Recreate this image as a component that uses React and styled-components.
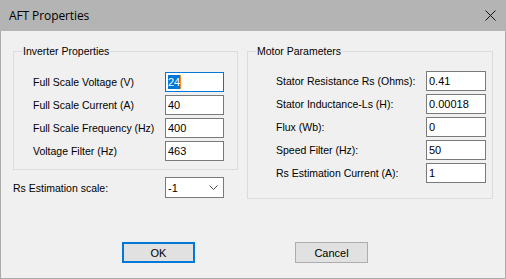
import React from "react";
import styled, { createGlobalStyle } from "styled-components";

const GlobalStyle = createGlobalStyle`
  html, body {
    margin: 0;
    padding: 0;
    background: #f0f0f0;
  }
  * {
    box-sizing: border-box;
  }
`;

const Window = styled.div`
  width: 506px;
  height: 279px;
  border: 1px solid #aaaaaa;
  border-top: none;
  background: #f0f0f0;
  font-family: "Liberation Sans", Arial, sans-serif;
  font-size: 10.5px;
  color: #000;
  display: flex;
  flex-direction: column;
`;

const TitleBar = styled.div`
  height: 31px;
  margin: 0 -1px;
  background: #b4b4b4;
  display: flex;
  align-items: center;
  justify-content: space-between;
  padding: 0 10px 0 9px;
  font-family: "Open Sans", "Noto Sans", sans-serif;
  font-size: 12px;
`;

const Title = styled.span`
  letter-spacing: -0.1px;
`;

const CloseIcon = () => (
  <svg width="11" height="11" viewBox="0 0 11 11">
    <path d="M0.5 0.5 L10.5 10.5 M10.5 0.5 L0.5 10.5" stroke="#111" strokeWidth="1" fill="none" />
  </svg>
);

const Body = styled.div`
  flex: 1;
  padding: 20px 12px 0 12px;
  display: flex;
  flex-direction: column;
`;

const TopRow = styled.div`
  display: flex;
  gap: 9px;
  align-items: flex-start;
`;

const Column = styled.div`
  width: 225px;
  display: flex;
  flex-direction: column;
`;

const GroupBox = styled.div`
  position: relative;
  width: ${(p) => p.$width}px;
  border: 1px solid #dcdcdc;
  padding: ${(p) => p.$pad};
`;

const Legend = styled.span`
  position: absolute;
  top: -8px;
  left: 8px;
  padding: 0 1px;
  background: #f0f0f0;
  line-height: 14px;
`;

const Rows = styled.div`
  display: flex;
  flex-direction: column;
  gap: 3px;
`;

const Row = styled.div`
  display: grid;
  grid-template-columns: 1fr ${(p) => p.$field}px;
  align-items: center;
  height: 20px;
`;

const Label = styled.span`
  white-space: nowrap;
`;

const TextBox = styled.div`
  height: 20px;
  border: 1px solid ${(p) => (p.$focused ? "#0078d7" : "#7a7a7a")};
  background: #fff;
  padding: 0 0 0 2px;
  display: flex;
  align-items: center;
  font-size: 11px;
`;

const Selected = styled.span`
  background: #0078d7;
  color: #fff;
  line-height: 14px;
  border-right: 1px solid #ff8c1a;
`;

const ScaleRow = styled.div`
  margin-top: 7px;
  display: grid;
  grid-template-columns: 152px 59px;
  align-items: center;
  height: 21px;
`;

const Combo = styled.div`
  height: 21px;
  border: 1px solid #7a7a7a;
  background: #fff;
  display: flex;
  align-items: center;
  justify-content: space-between;
  padding: 0 5px 0 2px;
  font-size: 11px;
`;

const Chevron = () => (
  <svg width="9" height="5" viewBox="0 0 9 5">
    <path d="M0.5 0.5 L4.5 4.5 L8.5 0.5" stroke="#555" strokeWidth="1" fill="none" />
  </svg>
);

const ButtonRow = styled.div`
  margin-top: 43px;
  padding-left: 109px;
  display: flex;
  gap: 100px;
`;

const Button = styled.div`
  width: 73px;
  height: 21px;
  background: #e1e1e1;
  border: ${(p) => (p.$default ? "2px solid #0078d7" : "1px solid #adadad")};
  display: flex;
  align-items: center;
  justify-content: center;
  font-size: 11px;
`;

const inverter = [
  ["Full Scale Voltage (V)", "24", true],
  ["Full Scale Current (A)", "40"],
  ["Full Scale Frequency (Hz)", "400"],
  ["Voltage Filter (Hz)", "463"],
];

const motor = [
  ["Stator Resistance Rs (Ohms):", "0.41"],
  ["Stator Inductance-Ls (H):", "0.00018"],
  ["Flux (Wb):", "0"],
  ["Speed Filter (Hz):", "50"],
  ["Rs Estimation Current (A):", "1"],
];

export default function App() {
  return (
    <>
      <GlobalStyle />
      <Window>
        <TitleBar>
          <Title>AFT Properties</Title>
          <CloseIcon />
        </TitleBar>
        <Body>
          <TopRow>
            <Column>
              <GroupBox $width={225} $pad="20px 13px 8px 19px">
                <Legend>Inverter Properties</Legend>
                <Rows>
                  {inverter.map(([label, value, focused]) => (
                    <Row key={label} $field={59}>
                      <Label>{label}</Label>
                      <TextBox $focused={focused}>
                        {focused ? <Selected>{value}</Selected> : value}
                      </TextBox>
                    </Row>
                  ))}
                </Rows>
              </GroupBox>
              <ScaleRow>
                <Label>Rs Estimation scale:</Label>
                <Combo>
                  -1
                  <Chevron />
                </Combo>
              </ScaleRow>
            </Column>
            <GroupBox $width={246} $pad="19px 6px 15px 28px">
              <Legend>Motor Parameters</Legend>
              <Rows>
                {motor.map(([label, value]) => (
                  <Row key={label} $field={60}>
                    <Label>{label}</Label>
                    <TextBox>{value}</TextBox>
                  </Row>
                ))}
              </Rows>
            </GroupBox>
          </TopRow>
          <ButtonRow>
            <Button $default>OK</Button>
            <Button>Cancel</Button>
          </ButtonRow>
        </Body>
      </Window>
    </>
  );
}
